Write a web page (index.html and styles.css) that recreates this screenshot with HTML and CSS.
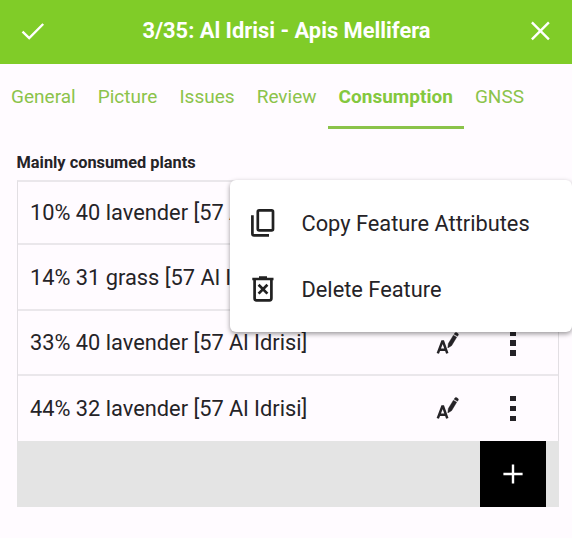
FILE: index.html
```
<!DOCTYPE html>
<html lang="en">
<head>
<meta charset="utf-8">
<title>Apis Mellifera</title>
<link rel="stylesheet" href="styles.css">
</head>
<body>
<svg class="symbols" aria-hidden="true">
  <symbol id="annotate" viewBox="0 0 24 24">
    <path d="M2.8 22.4 7.3 10.6h.8L12.3 22.4M4.4 18.8h6.4" fill="none" stroke="currentColor" stroke-width="2.5"/>
    <path d="M12.8 16.9 13.3 12.6 18.4 4.2 21.7 6.2 16.6 14.7Z M19.1 3.2 19.9 1.9Q20.5 1.1 21.4 1.6L23 2.6Q23.8 3.2 23.3 4L22.5 5.3Z" fill="currentColor" stroke="currentColor" stroke-width=".4"/>
  </symbol>
</svg>
<header class="bar">
  <svg class="bar-icon" viewBox="0 0 26 26"><path d="M2.5 13.6 9.2 20 23.2 6" /></svg>
  <h1 class="title">3/35: Al Idrisi - Apis Mellifera</h1>
  <svg class="bar-icon" viewBox="0 0 26 26"><path d="M4.9 4.4 21.9 21.4M21.9 4.4 4.9 21.4" /></svg>
</header>
<nav class="tabs">
  <span class="tab">General</span>
  <span class="tab">Picture</span>
  <span class="tab">Issues</span>
  <span class="tab">Review</span>
  <span class="tab active">Consumption</span>
  <span class="tab">GNSS</span>
</nav>
<main class="content">
  <h2 class="label">Mainly consumed plants</h2>
  <section class="list">
    <div class="row"><span class="name">10% 40 lavender [57 Al Idrisi]</span></div>
    <div class="row"><span class="name">14% 31 grass [57 Al Idrisi]</span></div>
    <div class="row"><span class="name">33% 40 lavender [57 Al Idrisi]</span>
      <span class="action"><svg class="annotate"><use href="#annotate"/></svg></span>
      <span class="action dots"><i></i><i></i><i></i></span></div>
    <div class="row"><span class="name">44% 32 lavender [57 Al Idrisi]</span>
      <span class="action"><svg class="annotate"><use href="#annotate"/></svg></span>
      <span class="action dots"><i></i><i></i><i></i></span></div>
    <div class="footer"><button class="add" aria-label="Add"><svg class="plus" viewBox="0 0 20 20"><path d="M10 .4v19.2M.4 10h19.2"/></svg></button></div>
  </section>
  <div class="menu">
    <div class="item">
      <svg class="menu-icon" viewBox="0 0 28 30"><rect x="7.8" y="2.4" width="15.2" height="20" rx="1.4"/><path d="M2.4 7.2v18.6q0 1.6 1.6 1.6H19"/></svg>
      <span class="copy">Copy Feature Attributes</span>
    </div>
    <div class="item">
      <svg class="menu-icon" viewBox="0 0 28 30"><path d="M2.3 5H23.5M9 3.7H17M4.6 5V24.2Q4.6 26.3 6.5 26.3H19.5Q21.4 26.3 21.4 24.2V5M8.6 10.8 17.4 19.6M17.4 10.8 8.6 19.6"/></svg>
      <span class="delete">Delete Feature</span>
    </div>
  </div>
</main>
</body>
</html>
```
FILE: styles.css
```
* { box-sizing: border-box; }
body { margin: 0; height: 538px; overflow: hidden; background: #fffbff; color: #252327; font-family: Roboto, sans-serif; }
.symbols { position: absolute; width: 0; height: 0; }
.bar { height: 63.5px; padding: 0 19px 2px 20px; display: flex; align-items: center; justify-content: space-between; background: #80cc28; color: #fff; }
.bar-icon { width: 26px; height: 26px; fill: none; stroke: #fff; stroke-width: 2.4; }
.title { margin: 0; padding-top: 1px; font-size: 21.85px; font-weight: 700; line-height: 30px; white-space: nowrap; }
.tabs { height: 65.5px; display: flex; color: #8bc34a; font-size: 19px; }
.tab { padding: 0 11.05px; line-height: 66px; white-space: nowrap; }
.tab.active { font-weight: 700; border-bottom: 3px solid #8bc34a; color: #84c83e; }
.content { position: relative; padding: 22px 13px 0 16.5px; }
.label { margin: 0; padding-top: 1px; height: 28.5px; font-size: 16.35px; line-height: 22px; font-weight: 700; white-space: nowrap; }
.list { border: 1px solid #e2dfe3; border-top: 2px solid #eae7eb; border-bottom: 0; }
.row { height: 65.5px; display: flex; align-items: center; padding: 1px 12px 0 12.5px; border-bottom: 2px solid #eae7eb; }
.row:first-child { height: 63.5px; padding-top: 0; }
.row:nth-child(4) { height: 64.5px; padding-top: 0; border-bottom: 0; }
.name { flex: 1; font-size: 21.8px; white-space: nowrap; }
.action { width: 66px; display: flex; align-items: center; justify-content: center; }
.annotate { width: 24px; height: 24px; }
.dots { flex-direction: column; gap: 4.5px; }
.dots i { width: 5.5px; height: 5.5px; background: #252327; }
.footer { height: 66px; margin: 0 -1px; padding-right: 13px; display: flex; justify-content: flex-end; background: #e4e4e4; }
.add { width: 66px; height: 66px; padding: 0; border: 0; display: grid; place-items: center; background: #000; }
.plus { width: 20px; height: 20px; fill: none; stroke: #fff; stroke-width: 2.4; }
.menu { position: absolute; left: 230px; top: 51px; width: 342px; height: 152px; padding: 11px 0 9px; background: #fff; border-radius: 6px; box-shadow: 0 2px 5px rgba(0,0,0,.4); }
.item { height: 65.4px; padding: 0 20px; display: flex; align-items: center; gap: 23.5px; font-size: 21.8px; white-space: nowrap; }
.menu-icon { width: 28px; height: 30px; margin-top: -1px; fill: none; stroke: #212121; stroke-width: 2.7; }
```
